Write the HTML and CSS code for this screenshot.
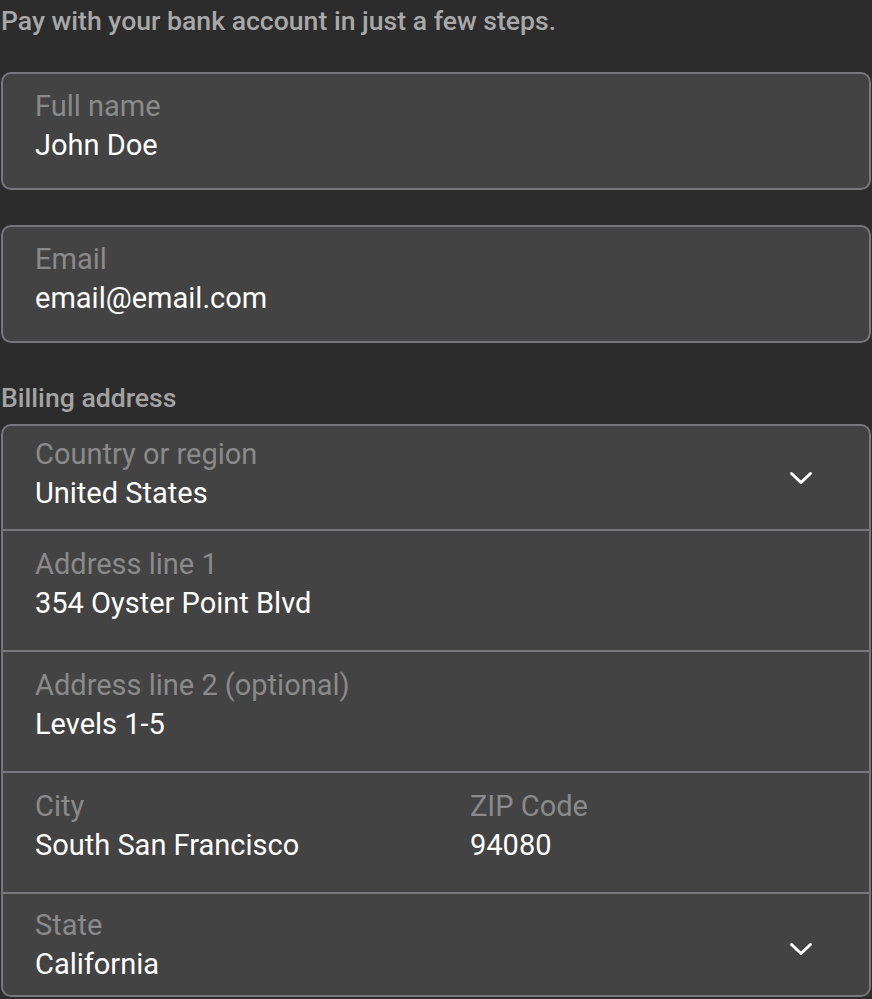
FILE: index.html
```html
<!DOCTYPE html>
<html lang="en">
<head>
<meta charset="utf-8">
<title>Pay with bank account</title>
<link rel="stylesheet" href="styles.css">
</head>
<body>
<div class="page">
  <p class="intro">Pay with your bank account in just a few steps.</p>

  <div class="field single">
    <div class="label">Full name</div>
    <div class="value">John Doe</div>
  </div>

  <div class="field single email">
    <div class="label">Email</div>
    <div class="value">email@email.com</div>
  </div>

  <p class="section">Billing address</p>

  <div class="group">
    <div class="row select country">
      <div class="texts">
        <div class="label">Country or region</div>
        <div class="value">United States</div>
      </div>
      <svg class="chev" width="24" height="15" viewBox="0 0 24 15"><path d="M2.5 2.5 L12 11.5 L21.5 2.5" fill="none" stroke="#ffffff" stroke-width="3" stroke-linecap="round" stroke-linejoin="round"/></svg>
    </div>
    <div class="row text">
      <div class="label">Address line 1</div>
      <div class="value">354 Oyster Point Blvd</div>
    </div>
    <div class="row text">
      <div class="label">Address line 2 (optional)</div>
      <div class="value">Levels 1-5</div>
    </div>
    <div class="row text split">
      <div class="cell">
        <div class="label">City</div>
        <div class="value">South San Francisco</div>
      </div>
      <div class="cell">
        <div class="label">ZIP Code</div>
        <div class="value">94080</div>
      </div>
    </div>
    <div class="row select state">
      <div class="texts">
        <div class="label">State</div>
        <div class="value">California</div>
      </div>
      <svg class="chev" width="24" height="15" viewBox="0 0 24 15"><path d="M2.5 2.5 L12 11.5 L21.5 2.5" fill="none" stroke="#ffffff" stroke-width="3" stroke-linecap="round" stroke-linejoin="round"/></svg>
    </div>
  </div>
</div>
</body>
</html>
```

FILE: styles.css
```css
html, body {
  margin: 0;
  padding: 0;
  background: #2c2c2c;
}
body {
  font-family: Roboto, "Liberation Sans", Arial, sans-serif;
  -webkit-font-smoothing: antialiased;
}
.page {
  padding: 3px 1px 0 1px;
}
.intro {
  margin: 0;
  font-size: 26.6px;
  line-height: 36px;
  font-weight: 500;
  color: #a8a8a8;
}
.field {
  margin-top: 33px;
  background: #434343;
  border: 2px solid #77767d;
  border-radius: 10px;
  padding: 13px 32px 23px 32px;
}
.field.email {
  margin-top: 35px;
}
.label {
  font-size: 29px;
  line-height: 39px;
  color: #8a8a8a;
  white-space: nowrap;
}
.value {
  font-size: 29px;
  line-height: 39px;
  color: #ffffff;
  white-space: nowrap;
}
.section {
  margin: 37px 0 8px 0;
  font-size: 26.6px;
  line-height: 36px;
  font-weight: 500;
  color: #a3a3a3;
}
.group {
  background: #434343;
  border: 2px solid #77767d;
  border-radius: 10px;
  overflow: hidden;
}
.row {
  padding: 0 32px;
  border-top: 2px solid #77767d;
}
.row:first-child {
  border-top: none;
}
.row.text {
  padding-top: 14px;
  padding-bottom: 27px;
}
.row.select {
  display: flex;
  align-items: center;
  justify-content: space-between;
  padding-right: 56px;
}
.row.country {
  padding-top: 9px;
  padding-bottom: 16px;
}
.row.state {
  padding-top: 12px;
  padding-bottom: 11px;
}
.chev {
  display: block;
  margin-top: 8px;
}
.row.split {
  display: grid;
  grid-template-columns: 1fr 1fr;
  column-gap: 68px;
}
```
